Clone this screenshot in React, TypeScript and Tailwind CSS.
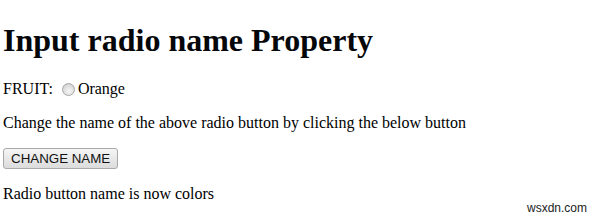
import { useState } from 'react';

export default function App() {
  const [name, setName] = useState('fruits');
  const [message, setMessage] = useState('Radio button name is now colors');

  const handleChange = () => {
    setName('colors');
    setMessage('Radio button name is now colors');
  };

  return (
    <div className="relative h-[219px] w-[599px] overflow-hidden bg-white px-[3px] pt-px font-['Liberation_Serif',serif] text-[16px] leading-[normal] text-black">
      <h1 className="mt-[20.5px] mb-[21.44px] text-[32px] font-bold leading-[37px] text-[#05070a]">
        Input radio name Property
      </h1>
      <p className="my-4 flex items-center">
        <span>FRUIT:</span>
        <input
          type="radio"
          name={name}
          value="orange"
          className="mt-[1px] mr-[3px] ml-[9px] h-[13px] w-[13px] appearance-none rounded-full border border-[#a6a6a6] bg-[radial-gradient(circle_at_55%_65%,#f6f6f6_0%,#dedede_55%,#c4c4c4_100%)]"
        />
        <span>Orange</span>
      </p>
      <p className="my-4">Change the name of the above radio button by clicking the below button</p>
      <div className="my-4 flex">
        <button
          onClick={handleChange}
          className="h-[21px] rounded-[3px] border border-[#a9a9a9] bg-linear-to-b from-[#f5f5f5] to-[#dcdcdc] px-[7px] font-['Liberation_Sans',Arial,sans-serif] text-[13.33px] leading-[19px] text-[#111]"
        >
          CHANGE NAME
        </button>
      </div>
      <p className="my-4">{message}</p>
      <span className="absolute right-[12px] bottom-[5px] font-['Liberation_Sans',Arial,sans-serif] text-[12px] leading-none text-[#222]">
        wsxdn.com
      </span>
    </div>
  );
}
